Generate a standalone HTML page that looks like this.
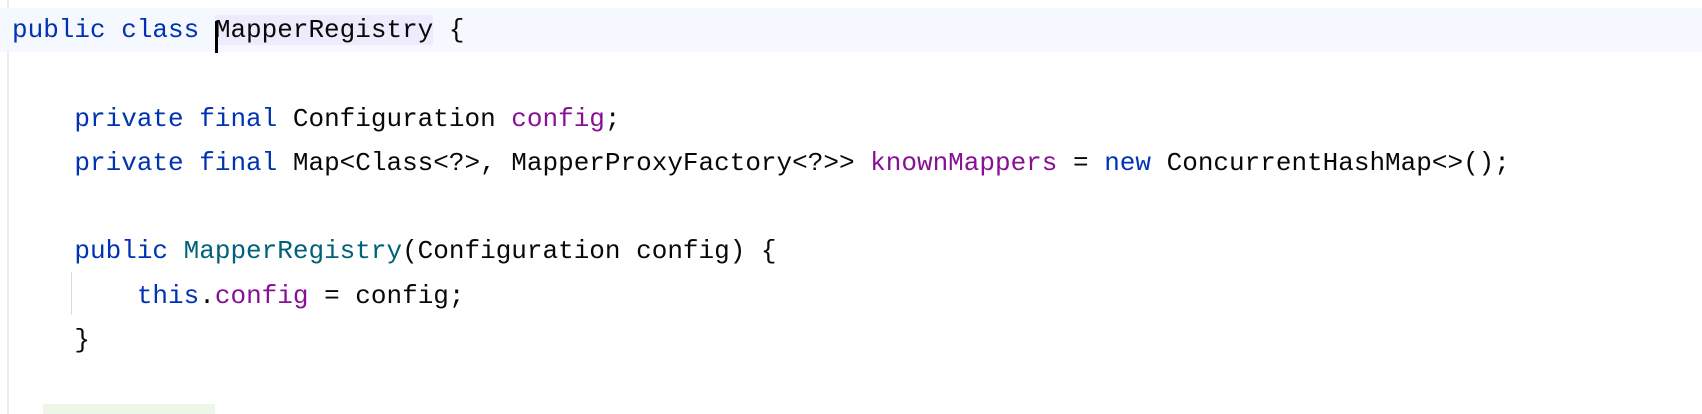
<!DOCTYPE html>
<html><head><style>
html,body{margin:0;padding:0;background:#fff;width:1702px;height:414px;overflow:hidden;position:relative}
.code{position:absolute;left:0;top:8px;width:1702px;font-family:"Liberation Mono",monospace;font-size:26px;color:#080808}
.l{height:44.3px;line-height:44.3px;padding-left:12px;white-space:pre}
.cur{background:#f5f8fe}
.k{color:#0033b3}.f{color:#871094}.m{color:#00627a}
.hl{background:#edebfc;position:relative}
.caret{position:absolute;left:0;top:6px;width:3px;height:32px;background:#000}
</style></head><body>
<div style="position:absolute;left:7px;top:0;width:2px;height:414px;background:#ebecf0"></div>
<div style="position:absolute;left:71px;top:272px;width:1px;height:43px;background:#dcdcdc"></div>
<div style="position:absolute;left:43px;top:404px;width:172px;height:10px;background:#edf6e8"></div>
<div class="code"><div class="l cur"><span class="k">public class </span><span class="hl"><span class="caret"></span>MapperRegistry</span> {</div><div class="l"> </div><div class="l">    <span class="k">private final </span>Configuration <span class="f">config</span>;</div><div class="l">    <span class="k">private final </span>Map&lt;Class&lt;?&gt;, MapperProxyFactory&lt;?&gt;&gt; <span class="f">knownMappers</span> = <span class="k">new </span>ConcurrentHashMap&lt;&gt;();</div><div class="l"> </div><div class="l">    <span class="k">public </span><span class="m">MapperRegistry</span>(Configuration config) {</div><div class="l">        <span class="k">this</span>.<span class="f">config</span> = config;</div><div class="l">    }</div></div>
</body></html>
